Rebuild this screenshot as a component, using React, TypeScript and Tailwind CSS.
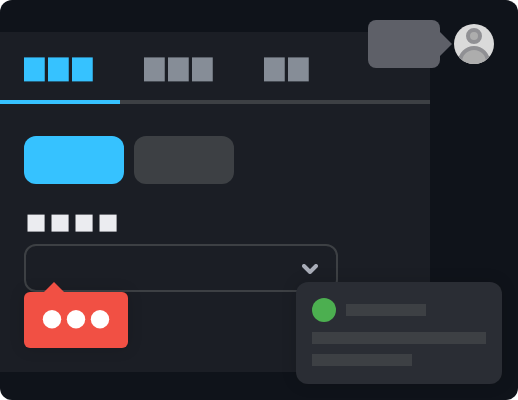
type BlocksProps = { count: number; className: string };

/** Row of solid blocks standing in for a tab title. */
function TabBlocks({ count, className }: BlocksProps) {
  return (
    <svg className={`block h-[25px] ${className}`} width={count * 24} height="25" fill="currentColor" aria-hidden="true">
      {Array.from({ length: count }, (_, i) => (
        <rect key={i} x={i * 24} y="0.4" width="20.75" height="24" />
      ))}
    </svg>
  );
}

function LabelBlocks() {
  return (
    <svg className="block text-[#ebecf0]" width="96" height="18" fill="currentColor" aria-hidden="true">
      {[0, 1, 2, 3].map((i) => (
        <rect key={i} x={i * 24 + 0.5} y="0.6" width="17.1" height="17" />
      ))}
    </svg>
  );
}

function Avatar() {
  return (
    <svg className="block size-10" viewBox="0 0 40 40" aria-hidden="true">
      <defs>
        <clipPath id="avatar-clip">
          <circle cx="20" cy="20" r="20" />
        </clipPath>
      </defs>
      <g clipPath="url(#avatar-clip)">
        <rect width="40" height="40" fill="#dadada" />
        <circle cx="20" cy="12" r="6" fill="#adadad" stroke="#909094" strokeWidth="4" />
        <circle cx="20" cy="38" r="14" fill="#adadad" stroke="#909094" strokeWidth="4" />
      </g>
    </svg>
  );
}

function Tabs() {
  return (
    <div className="h-[72px] border-b-4 border-[#3d4044]">
      <div className="flex h-[72px]">
        <div className="w-[120px] border-b-4 border-[#36c2ff] pt-[25px] pl-6">
          <TabBlocks count={3} className="text-[#36c2ff]" />
        </div>
        <div className="w-[120px] pt-[25px] pl-6">
          <TabBlocks count={3} className="text-[#868d97]" />
        </div>
        <div className="w-[120px] pt-[25px] pl-6">
          <TabBlocks count={2} className="text-[#868d97]" />
        </div>
      </div>
    </div>
  );
}

function ErrorTooltip() {
  return (
    <div className="absolute top-[292px] left-6 flex h-14 w-[104px] items-center justify-center rounded-md bg-[#f15044] shadow-[0_0_16px_rgba(0,0,0,0.14)]">
      <svg className="absolute -top-[10px] left-5" width="20" height="10" aria-hidden="true">
        <path d="M0 10 10 0l10 10z" fill="#f15044" />
      </svg>
      <svg width="72" height="24" fill="#ffffff" aria-hidden="true">
        {[12, 36, 60].map((cx) => (
          <circle key={cx} cx={cx} cy="11.2" r="9.2" />
        ))}
      </svg>
    </div>
  );
}

function HintBubble() {
  return (
    <div className="absolute top-5 left-[368px] h-12 w-[72px] rounded-lg bg-[#5e6068]">
      <svg className="absolute top-3 left-[72px]" width="12" height="24" aria-hidden="true">
        <path d="M0 0 12 12 0 24z" fill="#5e6068" />
      </svg>
    </div>
  );
}

function NotificationCard() {
  return (
    <div className="absolute top-[282px] left-[296px] h-[102px] w-[206px] rounded-xl bg-[#2a2d34] p-4 shadow-[0_0_16px_rgba(0,0,0,0.14)]">
      <div className="flex h-6 items-center gap-[10px]">
        <div className="size-6 rounded-full bg-[#4caf50]" />
        <div className="h-3 w-20 bg-[#3d4044]" />
      </div>
      <div className="mt-[10px] h-3 w-[174px] bg-[#3d4044]" />
      <div className="mt-[10px] h-3 w-[100px] bg-[#3d4044]" />
    </div>
  );
}

export default function App() {
  return (
    <div className="relative h-[400px] w-[518px] overflow-hidden rounded-xl bg-[#0f131a] pt-8">
      <main className="h-[340px] w-[430px] bg-[#1b1e25]">
        <Tabs />
        <div className="px-6 pt-8">
          <div className="flex gap-[10px]">
            <button aria-label="Primary" className="block h-12 w-[100px] rounded-xl bg-[#36c2ff]" />
            <button aria-label="Secondary" className="block h-12 w-[100px] rounded-xl bg-[#3d4044]" />
          </div>
          <div className="mt-[30px] pl-[3px]">
            <LabelBlocks />
          </div>
          <div className="mt-3 flex h-12 w-[314px] items-center justify-end rounded-xl border-2 border-[#3d4044] pr-[18px]">
            <svg className="mt-0.5" width="16" height="10" fill="none" stroke="#a9adb8" strokeWidth="4" strokeLinecap="round" strokeLinejoin="round" aria-hidden="true">
              <path d="m2 2 6 6 6-6" />
            </svg>
          </div>
        </div>
      </main>
      <ErrorTooltip />
      <HintBubble />
      <div className="absolute top-6 left-[454px]">
        <Avatar />
      </div>
      <NotificationCard />
    </div>
  );
}
